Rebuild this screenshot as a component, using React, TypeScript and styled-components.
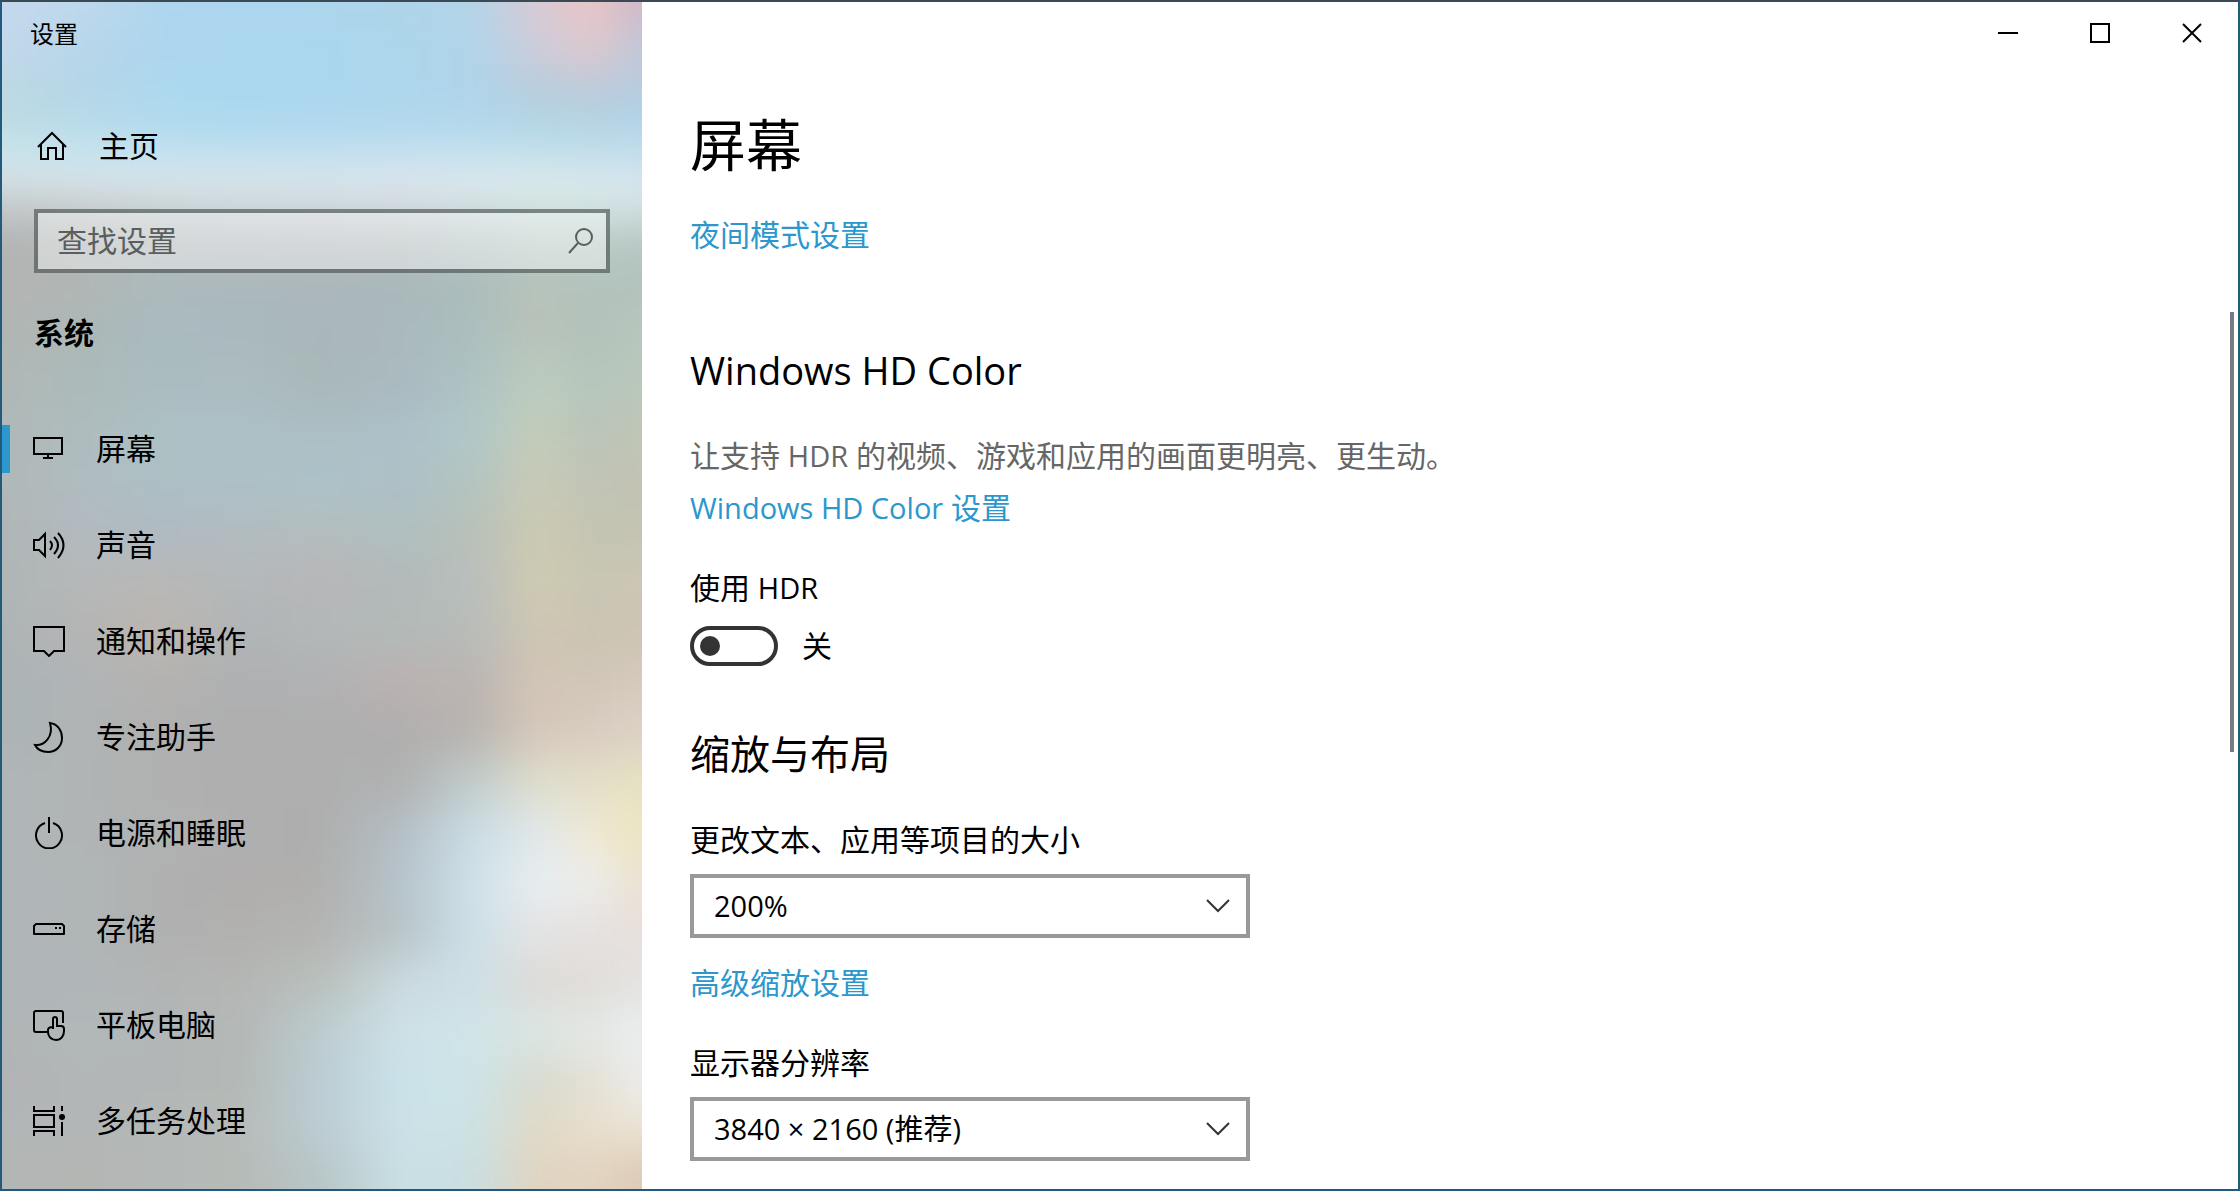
import React from "react";
import styled, { createGlobalStyle } from "styled-components";

const sans = `"Open Sans", "Noto Sans CJK SC", sans-serif`;
const accent = "#2b97cd";

const GlobalStyle = createGlobalStyle`
  *, *::before, *::after { box-sizing: border-box; }
  body {
    margin: 0;
    background: #ffffff;
    color: #000000;
    font-family: ${sans};
    font-size: 30px;
    line-height: 40px;
  }
  button, input, select { font: inherit; color: inherit; }
  h1, h2, p, ul { margin: 0; padding: 0; }
`;

const Window = styled.div`
  display: flex;
  min-height: 100vh;
  border: 2px solid #23597a;
  border-top-color: #3a4a55;
  border-right-color: #1f6070;
  background: #ffffff;
`;

/* ---------- sidebar ---------- */

const Sidebar = styled.aside`
  position: relative;
  flex: 0 0 640px;
  display: flex;
  flex-direction: column;
  overflow: hidden;
  isolation: isolate;
`;

const Backdrop = styled.svg`
  position: absolute;
  inset: 0;
  width: 100%;
  height: 100%;
  z-index: -1;
`;

const Caption = styled.div`
  padding: 16px 28px 0;
  font-size: 24px;
  line-height: 32px;
`;

const HomeLink = styled.a`
  display: flex;
  align-items: center;
  gap: 31px;
  margin-top: 66px;
  padding: 0 34px;
  height: 60px;
  color: inherit;
  text-decoration: none;
`;

const SearchBox = styled.div`
  display: flex;
  align-items: center;
  margin: 33px 32px 0;
  height: 64px;
  padding: 0 12px 0 19px;
  border: 4px solid rgba(70, 76, 76, 0.62);
  background: rgba(255, 255, 255, 0.4);
  background-clip: padding-box;
`;

const SearchInput = styled.input`
  flex: 1;
  min-width: 0;
  height: 40px;
  padding: 0;
  border: 0;
  outline: 0;
  background: transparent;
  &::placeholder { color: #5a5e5f; opacity: 1; }
`;

const GroupTitle = styled.h2`
  margin: 40px 32px 0;
  font-size: 30px;
  line-height: 40px;
  font-weight: 700;
`;

const NavList = styled.ul`
  display: flex;
  flex-direction: column;
  margin-top: 48px;
  list-style: none;
`;

const NavLink = styled.a<{ $active: boolean }>`
  display: flex;
  align-items: center;
  gap: 31px;
  height: 96px;
  color: inherit;
  text-decoration: none;
  &::before {
    content: "";
    width: 8px;
    height: 48px;
    margin-right: -8px;
    background: ${(p) => (p.$active ? accent : "transparent")};
  }
`;

const Icon = styled.svg`
  flex: none;
  display: block;
  fill: none;
  stroke: currentColor;
  stroke-width: 2;
`;

/* ---------- main pane ---------- */

const Main = styled.main`
  flex: 1;
  min-width: 0;
  display: flex;
  flex-direction: column;
`;

const TitleBar = styled.header`
  display: flex;
  justify-content: flex-end;
  height: 62px;
`;

const WindowButton = styled.button`
  display: grid;
  place-items: center;
  width: 92px;
  height: 62px;
  padding: 0;
  border: 0;
  background: transparent;
`;

const Body = styled.div`
  flex: 1;
  display: flex;
  justify-content: space-between;
`;

const Content = styled.div`
  display: flex;
  flex-direction: column;
  align-items: flex-start;
  padding: 44px 48px 27px;
`;

const PageTitle = styled.h1`
  font-size: 56px;
  line-height: 72px;
  font-weight: 400;
`;

const Section = styled.section<{ $top: number }>`
  display: flex;
  flex-direction: column;
  align-items: flex-start;
  margin-top: ${(p) => p.$top}px;
`;

const SectionTitle = styled.h2<{ $latin?: boolean }>`
  font-size: ${(p) => (p.$latin ? 38 : 40)}px;
  line-height: 52px;
  font-weight: 400;
`;

const Latin = styled.span`
  font-size: 29px;
`;

const Hint = styled.p`
  margin-top: 40px;
  color: #666666;
`;

const TextLink = styled.a<{ $top: number }>`
  margin-top: ${(p) => p.$top}px;
  color: ${accent};
  text-decoration: none;
`;

const FieldLabel = styled.label`
  margin-top: 40px;
`;

const ToggleRow = styled.div`
  display: flex;
  align-items: center;
  gap: 24px;
  margin-top: 18px;
`;

const Toggle = styled.input`
  appearance: none;
  display: flex;
  align-items: center;
  width: 88px;
  height: 40px;
  margin: 0;
  padding: 0 6px;
  border: 4px solid #333333;
  border-radius: 20px;
  &::before {
    content: "";
    width: 20px;
    height: 20px;
    border-radius: 50%;
    background: #333333;
  }
  &:checked {
    justify-content: flex-end;
    border-color: ${accent};
    background: ${accent};
  }
  &:checked::before { background: #ffffff; }
`;

const SelectBox = styled.div`
  display: grid;
  align-items: center;
  width: 560px;
  margin-top: 14px;
  & > * { grid-area: 1 / 1; }
  & > svg {
    justify-self: end;
    margin-right: 20px;
    color: #333333;
    pointer-events: none;
  }
`;

const Select = styled.select`
  appearance: none;
  width: 100%;
  height: 64px;
  padding: 0 56px 0 20px;
  border: 4px solid #999999;
  border-radius: 0;
  background: #ffffff;
  font-size: 29px;
`;

const ScrollRail = styled.div`
  width: 8px;
  padding-top: 248px;
`;

const ScrollThumb = styled.div`
  width: 4px;
  height: 440px;
  background: #767a84;
`;

/* ---------- wallpaper showing through the acrylic sidebar ---------- */

const columns = [0, 80, 160, 240, 320, 400, 470, 535, 590, 640];

const bands: [number, string][] = [
  [0, "c6d8ee bed8ec aed6ee acd6ee acd6ec aed4ea b4d4e8 d8cad4 e8c6c6 d0b8c8"],
  [50, "c2d8ea b8d6ea acd6ee aad6ee aad6ee acd6ea b0d4ea ccccda dcc8ce c0c8da"],
  [95, "bcd8e2 b4d6e6 acd8ee aad6ee aad6ee acd6ec b0d4ea b4cede b8ccdc b2cde2"],
  [135, "c0dee6 bcdeec b4dcee b2daee b4daee b6daee b6daec b4dae8 b6d8e6 b4d8ea"],
  [170, "d6e8ee d6e8f0 d6e8f0 d6e8f0 d6e6f0 d8e6f0 d8e8f0 d8e8ee d6e6ee d4e4f0"],
  [200, "c8cccc ced2d4 d2dadc d4dcdf d6dee0 d8e0e4 d8e4e6 d8e8e6 d8e8e8 d8e6e8"],
  [235, "b2b4b4 b4b8b8 b4babc b6bcc0 b8bcc0 b8bec0 b8c6c6 bccec8 bccec8 b6c8c4"],
  [280, "b4b4b4 b0b6b4 adbabc abb8bc abb7bc a9b8ba acbcbc b6c2ba b2c2bc b2c2bc"],
  [330, "b0b6b4 acb8b6 a9bac0 a9b9be aab7ba aab9bd abbfbf b9c2b8 b2c2bb b8c6bc"],
  [380, "b0b8b6 acbaba abbcc0 acbcc0 a9b7b8 aabac0 aec2c2 bdccbf b6c6bc bac8bb"],
  [430, "b0b8b8 aebcbe acc0c4 acc0c6 acbfc4 acc0c8 b0c8c8 c2ccb8 bac4ba c0c6b6"],
  [480, "b0b8b8 b0bcc0 acc0c4 acc0c6 acc2c8 adc0c6 b4c4c0 c8cab6 c0c4b8 c3c3b2"],
  [530, "b0b6b6 b2bac0 b0bac2 b2bcc0 b4bdbe b0bec0 b8c0b8 cccab2 c4c4b2 c4c4b2"],
  [580, "aeb6b6 b6b8b8 b8b8b6 b4b8ba b8b6b8 b2bab9 b8bebc cfcab1 c8c6b4 cec6b4"],
  [630, "aeb4b6 b4b4b4 bcb6b0 b0b4b6 b2b8b8 b2bab8 b8bcb8 cfc6b4 cac4b2 cec4b4"],
  [680, "acb4b6 b0b4b6 b4b2b0 aeb0b2 b1b1b3 bcb1b1 bab4b2 d2c5b6 d0c6b8 d6cabc"],
  [730, "acb4b6 b0b4b4 b0b0b0 afafaf afafaf b0aeae b8b4b0 d6c8bb d8ccc0 dcd2c6"],
  [780, "b0b6b8 b0b4b4 b0b0b0 afafaf afafaf b0b1b1 c0cccc dedecc e4dec8 e6e2c2"],
  [830, "b0b6b8 b0b4b4 b0b2b2 b0afaf aeaeae b4bfc6 cadce4 e0e8ea f0e8d4 ece6c0"],
  [880, "b0b6b8 b0b6b6 b0b0b0 b0aeae b0b0ae b6c4cc cfe0e8 e8eef0 ececea ece2d0"],
  [930, "b0b6b8 b0b6b6 b0b0b0 b1b1af b4b4b2 b8c4c8 cce0e8 e4e4e4 e6e2e0 e8dedc"],
  [980, "b0b6b8 b0b6b8 b2b4b4 b4b6b4 b9c0bc cadae0 cee0e6 dedad6 e0dcd8 e4e4e2"],
  [1030, "b0b4b6 b2b8b8 b2b6b6 b4b8b6 bcccd0 cee2e8 d0e4e8 dae6e2 e4e8e6 eaeeef"],
  [1080, "b2b4b6 b2b6b6 b2b6b6 b4b9b6 bccdd4 cae2ea cee4e6 d8dad0 e4e0d4 ececec"],
  [1125, "b2b6b6 b2b6b6 b4b8b6 b6bbb8 bccdd4 cce2e8 cce2e4 e0dac6 e8dfce ece4d4"],
  [1170, "b2b6b4 b4b6b4 b4b8b6 b6bbb8 b8c6c8 cae0e4 cadee2 e0d4c0 e2d4c0 dccab6"],
];

const bandEdge = (i: number) =>
  i <= 0 ? -80 : i >= bands.length ? 1280 : (bands[i - 1][0] + bands[i][0]) / 2;

function Wallpaper() {
  return (
    <Backdrop viewBox="0 0 640 1187" preserveAspectRatio="none" aria-hidden="true">
      <defs>
        <filter id="soften" x="-20%" y="-20%" width="140%" height="140%" colorInterpolationFilters="sRGB">
          <feGaussianBlur stdDeviation="14 20" />
        </filter>
        {bands.map(([y, colors]) => (
          <linearGradient key={y} id={`band-${y}`} gradientUnits="userSpaceOnUse" x1="0" x2="640" y1="0" y2="0">
            {colors.split(" ").map((c, i) => (
              <stop key={i} offset={columns[i] / 640} stopColor={`#${c}`} />
            ))}
          </linearGradient>
        ))}
      </defs>
      <g filter="url(#soften)">
        {bands.map(([y], i) => (
          <rect
            key={y}
            x="-80"
            width="800"
            y={bandEdge(i)}
            height={bandEdge(i + 1) - bandEdge(i) + 1}
            fill={`url(#band-${y})`}
          />
        ))}
      </g>
    </Backdrop>
  );
}

/* ---------- icons, drawn on a 32px grid ---------- */

const navItems: { label: string; icon: React.ReactNode }[] = [
  {
    label: "屏幕",
    icon: <path d="M1 5h28v16H1zM15 21v4M10 25h10" />,
  },
  {
    label: "声音",
    icon: (
      <path d="M1 11h5l6-6v22l-6-6H1zM17 12q4 4 0 9M21 8q8 8 0 17M25 4q11 12 0 25" />
    ),
  },
  {
    label: "通知和操作",
    icon: <path d="M1 2h30v24h-10l-5 5-5-5H1z" />,
  },
  {
    label: "专注助手",
    icon: <path d="M17 2c8 1 12 8 12 15 0 8-6 14-14 14-6 0-11-3-13-7 9 1 19-8 15-22z" />,
  },
  {
    label: "电源和睡眠",
    icon: <path d="M16 0v16M12 6A13 13 0 1 0 20 6" />,
  },
  {
    label: "存储",
    icon: (
      <>
        <path d="M3 11h26l2 2v8H1v-8z" strokeLinejoin="round" />
        <path d="M22 15h2M26 15h2" />
      </>
    ),
  },
  {
    label: "平板电脑",
    icon: (
      <path d="M15 23H3q-2 0-2-2V4q0-2 2-2h25q2 0 2 2v10M20 20v-10q0-2 2-2t2 2v7h4q3 0 3 3v2c0 5-3 9-8 9-5 0-8-4-8-8v-2q0-3 5-3" />
    ),
  },
  {
    label: "多任务处理",
    icon: (
      <>
        <path d="M1 1v5h20V1M1 31v-5h20v5M1 10h20v12H1zM29 1v5M29 17v14" />
        <circle cx="29" cy="12" r="3" fill="currentColor" stroke="none" />
      </>
    ),
  },
];

function Chevron() {
  return (
    <Icon width="24" height="14" viewBox="0 0 24 14" aria-hidden="true">
      <path d="M1 1l11 11L23 1" />
    </Icon>
  );
}

export default function App() {
  return (
    <>
      <GlobalStyle />
      <Window>
        <Sidebar>
          <Wallpaper />
          <Caption>设置</Caption>
          <HomeLink href="#home">
            <Icon width="32" height="32" viewBox="0 0 32 32" aria-hidden="true">
              <path d="M2 17L16 3l14 14M5 14v15h7v-11h8v11h7V14" />
            </Icon>
            主页
          </HomeLink>
          <SearchBox>
            <SearchInput type="text" placeholder="查找设置" aria-label="查找设置" />
            <Icon width="26" height="26" viewBox="0 0 26 26" color="#5a5e5f" aria-hidden="true">
              <circle cx="16" cy="9" r="8" />
              <path d="M10 15L1 25" />
            </Icon>
          </SearchBox>
          <GroupTitle>系统</GroupTitle>
          <nav aria-label="系统">
            <NavList>
              {navItems.map((item, i) => (
                <li key={item.label}>
                  <NavLink href={`#${i}`} $active={i === 0} aria-current={i === 0 ? "page" : undefined}>
                    <Icon width="32" height="32" viewBox="0 0 32 32" aria-hidden="true">
                      {item.icon}
                    </Icon>
                    {item.label}
                  </NavLink>
                </li>
              ))}
            </NavList>
          </nav>
        </Sidebar>

        <Main>
          <TitleBar>
            <WindowButton aria-label="最小化">
              <Icon width="20" height="20" viewBox="0 0 20 20">
                <path d="M0 10h20" />
              </Icon>
            </WindowButton>
            <WindowButton aria-label="最大化">
              <Icon width="20" height="20" viewBox="0 0 20 20">
                <path d="M1 1h18v18H1z" />
              </Icon>
            </WindowButton>
            <WindowButton aria-label="关闭">
              <Icon width="20" height="20" viewBox="0 0 20 20">
                <path d="M1 1l18 18M19 1L1 19" />
              </Icon>
            </WindowButton>
          </TitleBar>

          <Body>
            <Content>
              <PageTitle>屏幕</PageTitle>
              <TextLink href="#night" $top={35}>夜间模式设置</TextLink>

              <Section $top={89}>
                <SectionTitle $latin>Windows HD Color</SectionTitle>
                <Hint>
                  让支持 <Latin>HDR</Latin> 的视频、游戏和应用的画面更明亮、更生动。
                </Hint>
                <TextLink href="#hd-color" $top={12}>
                  <Latin>Windows HD Color</Latin> 设置
                </TextLink>
                <FieldLabel htmlFor="hdr">
                  使用 <Latin>HDR</Latin>
                </FieldLabel>
                <ToggleRow>
                  <Toggle id="hdr" type="checkbox" role="switch" />
                  <span>关</span>
                </ToggleRow>
              </Section>

              <Section $top={62}>
                <SectionTitle>缩放与布局</SectionTitle>
                <FieldLabel htmlFor="scale">更改文本、应用等项目的大小</FieldLabel>
                <SelectBox>
                  <Select id="scale" defaultValue="200%">
                    <option>200%</option>
                  </Select>
                  <Chevron />
                </SelectBox>
                <TextLink href="#scaling" $top={25}>高级缩放设置</TextLink>
                <FieldLabel htmlFor="resolution">显示器分辨率</FieldLabel>
                <SelectBox>
                  <Select id="resolution" defaultValue="3840 × 2160 (推荐)">
                    <option>3840 × 2160 (推荐)</option>
                  </Select>
                  <Chevron />
                </SelectBox>
              </Section>
            </Content>
            <ScrollRail>
              <ScrollThumb />
            </ScrollRail>
          </Body>
        </Main>
      </Window>
    </>
  );
}
